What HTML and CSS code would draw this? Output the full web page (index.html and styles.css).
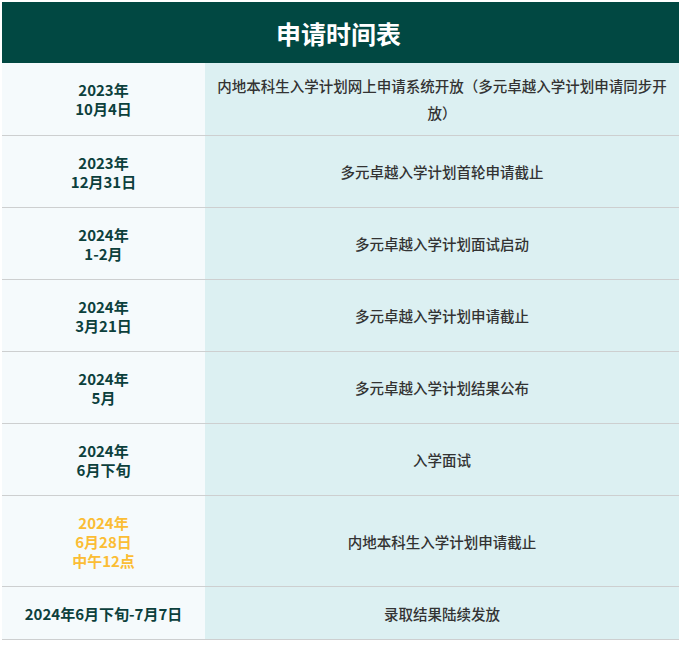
FILE: index.html
```html
<!DOCTYPE html>
<html lang="zh">
<head>
<meta charset="utf-8">
<link rel="stylesheet" href="styles.css">
</head>
<body>
<div class="schedule">
  <div class="title">申请时间表</div>
  <div class="rows">
    <div class="row">
      <div class="date">2023年<br>10月4日</div>
      <div class="event">内地本科生入学计划网上申请系统开放（多元卓越入学计划申请同步开放）</div>
    </div>
    <div class="row">
      <div class="date">2023年<br>12月31日</div>
      <div class="event">多元卓越入学计划首轮申请截止</div>
    </div>
    <div class="row">
      <div class="date">2024年<br>1-2月</div>
      <div class="event">多元卓越入学计划面试启动</div>
    </div>
    <div class="row">
      <div class="date">2024年<br>3月21日</div>
      <div class="event">多元卓越入学计划申请截止</div>
    </div>
    <div class="row">
      <div class="date">2024年<br>5月</div>
      <div class="event">多元卓越入学计划结果公布</div>
    </div>
    <div class="row">
      <div class="date">2024年<br>6月下旬</div>
      <div class="event">入学面试</div>
    </div>
    <div class="row">
      <div class="date highlight">2024年<br>6月28日<br>中午12点</div>
      <div class="event">内地本科生入学计划申请截止</div>
    </div>
    <div class="row">
      <div class="date">2024年6月下旬-7月7日</div>
      <div class="event">录取结果陆续发放</div>
    </div>
  </div>
</div>
</body>
</html>
```

FILE: styles.css
```css
html, body {
  margin: 0;
  padding: 0;
  background: #ffffff;
}

body {
  font-family: "Noto Sans CJK SC", "Noto Sans", sans-serif;
}

.schedule {
  margin: 2px 0 0 2px;
  width: 677px;
}

.title {
  height: 61px;
  background: #014842;
  color: #ffffff;
  font-size: 25px;
  font-weight: 700;
  display: flex;
  align-items: center;
  justify-content: center;
  padding-right: 4px;
}

.row {
  display: grid;
  grid-template-columns: 203px 1fr;
  border-bottom: 1px solid #cdcfd0;
}

.date {
  background: #f5fafc;
  color: #0c403c;
  font-size: 15px;
  font-weight: 700;
  line-height: 19px;
  padding: 16.5px 8px;
  text-align: center;
  display: flex;
  align-items: center;
  justify-content: center;
}

.date.highlight {
  color: #fbbd35;
}

.event {
  background: #dcf0f2;
  color: #333333;
  font-size: 14.5px;
  font-weight: 500;
  line-height: 27px;
  padding: 9px 10px;
  text-align: center;
  display: flex;
  align-items: center;
  justify-content: center;
}
```
